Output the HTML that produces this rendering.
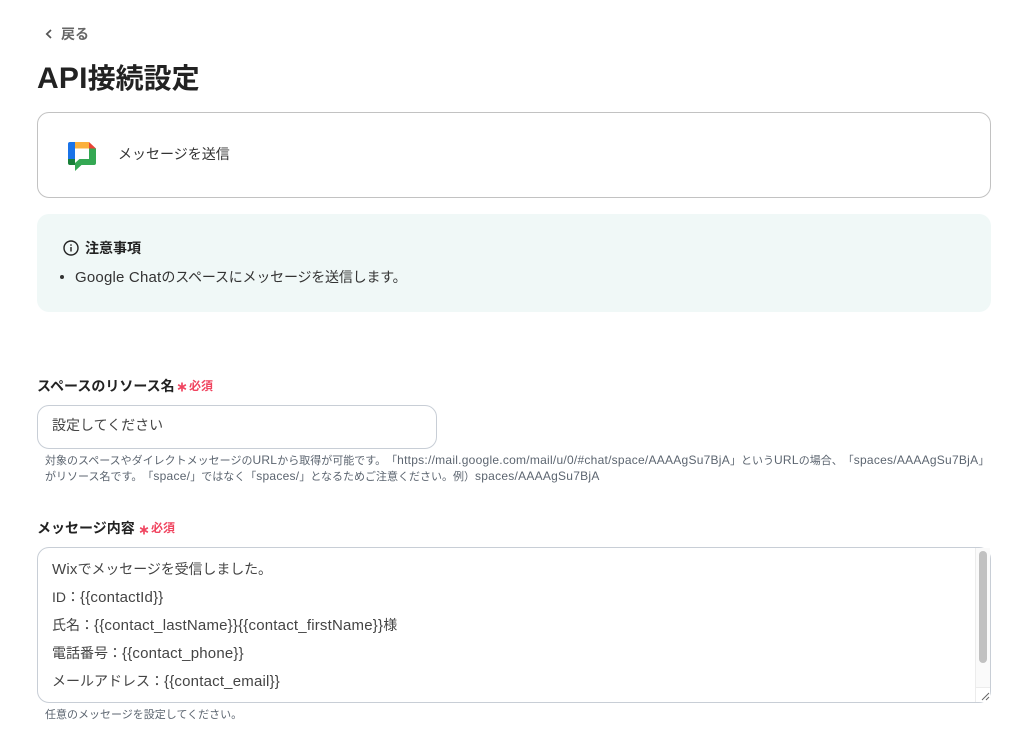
<!DOCTYPE html>
<html lang="ja">
<head>
<meta charset="utf-8">
<style>
html,body{margin:0;padding:0;background:#fff;width:1028px;height:747px;overflow:hidden}
body{font-family:"Liberation Sans","Noto Sans CJK JP",sans-serif;color:#333;position:relative;text-spacing-trim:space-all}
.t{position:absolute;white-space:nowrap}
.box{position:absolute;box-sizing:border-box}
.req{color:#f0445f;font-weight:700;font-size:12px;line-height:20px}
.help{font-size:11px;color:#5c6570;line-height:18px}
.help .l{font-size:12px;letter-spacing:.25px}
.lbl{font-size:14px;font-weight:700;color:#222;line-height:20px}
.ta{font-size:14px;color:#444;line-height:20px}
.l{font-size:15px;letter-spacing:.2px}
</style>
</head>
<body>
<svg class="box" style="left:44px;top:28px" width="10" height="12" viewBox="0 0 10 12"><path d="M7 2 L2.8 6 L7 10" fill="none" stroke="#555" stroke-width="1.7"/></svg>
<div class="t" style="left:61px;top:24px;font-size:14px;font-weight:700;color:#666;line-height:20px">戻る</div>
<div class="t" style="left:37px;top:60px;font-size:28px;font-weight:700;color:#222;line-height:38px"><span style="font-size:30px;letter-spacing:.2px">API</span>接続設定</div>

<div class="box" style="left:37px;top:112px;width:954px;height:86px;border:1px solid #c2c2c2;border-radius:12px"></div>
<svg class="box" style="left:68px;top:142px" width="28" height="29" viewBox="0 0 28 29">
<path d="M7 0 H2 Q0 0 0 2 V17 H7Z" fill="#1a73e8"/>
<path d="M0 17 H7 V23 H2 Q0 23 0 21Z" fill="#188038"/>
<rect x="7" y="0" width="14" height="6.5" fill="#fbb03b"/>
<path d="M21 0 L28 6.5 H21Z" fill="#ea4335"/>
<path d="M21 6.5 H28 V21 Q28 23 26 23 H13.5 L7 29 V17 H21Z" fill="#34a853"/>
<path d="M7 6.5 H21 V17 H11.5 L7 21Z" fill="#fff"/>
</svg>
<div class="t" style="left:118px;top:144px;font-size:14px;color:#333;line-height:20px">メッセージを送信</div>

<div class="box" style="left:37px;top:214px;width:954px;height:98px;background:#f0f8f7;border-radius:12px"></div>
<svg class="box" style="left:63px;top:240px" width="16" height="16" viewBox="0 0 16 16"><circle cx="8" cy="8" r="7" fill="none" stroke="#222" stroke-width="1.4"/><rect x="7.3" y="7" width="1.4" height="4.5" fill="#222"/><rect x="7.3" y="4.3" width="1.4" height="1.5" fill="#222"/></svg>
<div class="t" style="left:85px;top:238px;font-size:14px;font-weight:700;color:#222;line-height:20px">注意事項</div>
<div class="box" style="left:60px;top:275px;width:4px;height:4px;border-radius:50%;background:#333"></div>
<div class="t" style="left:75px;top:267px;font-size:14px;color:#333;line-height:20px"><span class="l">Google Chat</span><span style="letter-spacing:-.2px">のスペースにメッセージを送信します。</span></div>

<div class="t lbl" style="left:37px;top:376px">スペースのリソース名</div>
<svg class="box" style="left:177px;top:382px" width="10" height="10" viewBox="0 0 9 9"><path d="M4.5 .5 V8.5 M1 2.5 L8 6.5 M8 2.5 L1 6.5" stroke="#f0445f" stroke-width="1.5" fill="none"/></svg>
<div class="t req" style="left:189px;top:376px">必須</div>
<div class="box" style="left:37px;top:405px;width:400px;height:44px;border:1px solid #c8ced6;border-radius:12px"></div>
<div class="t" style="left:52px;top:415px;font-size:14px;color:#444;line-height:20px">設定してください</div>
<div class="t help" style="left:45px;top:451px">対象のスペースやダイレクトメッセージの<span class="l">URL</span>から取得が可能です。「<span class="l">https://mail.google.com/mail/u/0/#chat/space/AAAAgSu7BjA</span>」という<span class="l">URL</span>の場合、「<span class="l">spaces/AAAAgSu7BjA</span>」</div>
<div class="t help" style="left:45px;top:467px">がリソース名です。「<span class="l">space/</span>」ではなく「<span class="l">spaces/</span>」となるためご注意ください。例）<span class="l">spaces/AAAAgSu7BjA</span></div>

<div class="t lbl" style="left:37px;top:518px">メッセージ内容</div>
<svg class="box" style="left:139px;top:525px" width="10" height="10" viewBox="0 0 9 9"><path d="M4.5 .5 V8.5 M1 2.5 L8 6.5 M8 2.5 L1 6.5" stroke="#f0445f" stroke-width="1.5" fill="none"/></svg>
<div class="t req" style="left:151px;top:518px">必須</div>
<div class="box" style="left:37px;top:547px;width:954px;height:156px;border:1px solid #c8ced6;border-radius:12px"></div>
<div class="box" style="left:975px;top:548px;width:15px;height:154px;background:#fafafa;border-left:1px solid #ececec"></div>
<div class="box" style="left:979px;top:551px;width:8px;height:112px;background:#c1c1c1;border-radius:4px"></div>
<div class="box" style="left:975px;top:687px;width:15px;height:15px;background:#fff;border-left:1px solid #ececec;border-top:1px solid #ececec"></div>
<svg class="box" style="left:981px;top:692px" width="9" height="9" viewBox="0 0 9 9"><path d="M1 8 L8 1 M5 8 L8 5" stroke="#666" stroke-width="1" fill="none"/></svg>
<div class="t ta" style="left:52px;top:559px"><span class="l">Wix</span><span style="letter-spacing:-.1px">でメッセージを受信しました。</span></div>
<div class="t ta" style="left:52px;top:587px">ID：<span class="l">{{contactId}}</span></div>
<div class="t ta" style="left:52px;top:615px">氏名：<span class="l">{{contact_lastName}}{{contact_firstName}}</span>様</div>
<div class="t ta" style="left:52px;top:643px">電話番号：<span class="l">{{contact_phone}}</span></div>
<div class="t ta" style="left:52px;top:671px">メールアドレス：<span class="l">{{contact_email}}</span></div>
<div class="t help" style="left:45px;top:706px">任意のメッセージを設定してください。</div>
</body>
</html>
